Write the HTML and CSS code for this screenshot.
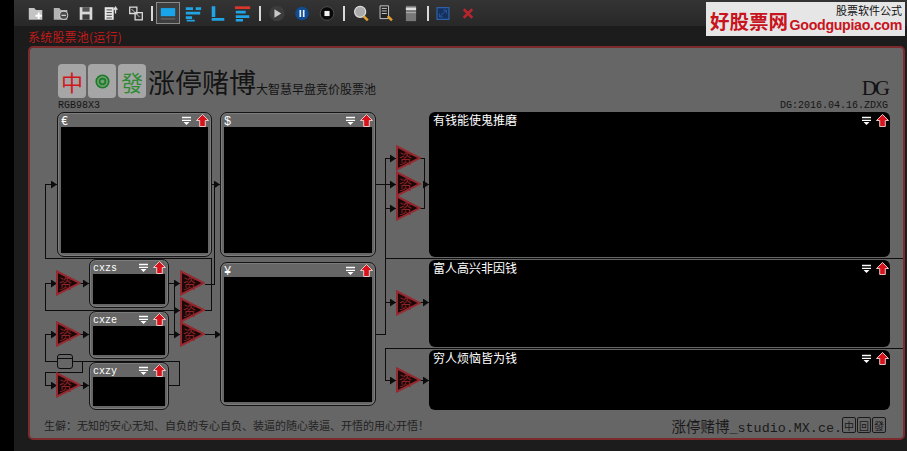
FILE: index.html
```html
<!DOCTYPE html>
<html lang="zh-CN">
<head>
    <meta charset="UTF-8">
    <meta name="viewport" content="width=device-width, initial-scale=1.0">
    <title>涨停赌博</title>
    <link rel="stylesheet" href="styles.css">
</head>
<body>
    <svg class="defs" width="0" height="0">
        <defs>
            <symbol id="i-sort" viewBox="0 0 12 12">
                <path d="M0 1h12v2H0zM0 5h12v1.5H0z" fill="#fff"/>
                <path d="M2 8h8l-4 4z" fill="#fff"/>
            </symbol>
            <symbol id="i-up" viewBox="0 0 14 14">
                <path d="M7 .5 13.5 7H10v6.5H4V7H.5z" fill="#d8131b" stroke="#f3d6d6" stroke-width="1"/>
            </symbol>
            <symbol id="i-tri" viewBox="0 0 25 26">
                <path d="M1 1.5 24 13 1 24.5z" fill="#1a0808" stroke="#962a30" stroke-width="2"/>
                <text x="3" y="18" class="tri-text">资</text>
            </symbol>
            <marker id="arrow" viewBox="0 0 6 8" refX="6" refY="4" markerWidth="6" markerHeight="8" markerUnits="userSpaceOnUse" orient="auto">
                <path d="M0 0 6 4 0 8z" fill="#0c0c0c"/>
            </marker>
        </defs>
    </svg>

    <div class="side"></div>
    <div class="main">
        <div class="toolbar">
            <span class="tool"><svg viewBox="0 0 20 18"><path d="M2 3h6l2 2h7v11H2z" fill="#c4c4c4"/><path d="M13 8v7M9.5 11.5h7" stroke="#fff" stroke-width="2"/></svg></span>
            <span class="tool"><svg viewBox="0 0 20 18"><path d="M2 3h6l2 2h7v11H2z" fill="#b4b4b4"/><circle cx="13" cy="11" r="4.5" fill="#4a4a4a" stroke="#ddd"/><path d="M10.5 11h5" stroke="#fff"/></svg></span>
            <span class="tool"><svg viewBox="0 0 20 18"><path d="M3 2h14v14H3z" fill="#d8d8d8"/><path d="M6 2h8v5H6z" fill="#555"/><path d="M6 10h8v6H6z" fill="#3a3a3a"/></svg></span>
            <span class="tool"><svg viewBox="0 0 20 18"><path d="M3 2h10v14H3z" fill="#e8e8e8"/><path d="M5 5h6M5 8h6M5 11h6M5 14h6" stroke="#333"/><path d="M15 9V3M13 5l2-3 2 3" stroke="#ddd" stroke-width="1.5" fill="none"/></svg></span>
            <span class="tool"><svg viewBox="0 0 20 18"><path d="M3 2h8v7H3zM9 8h8v8H9z" fill="#333" stroke="#ddd" stroke-width="1.4"/><path d="M5 4l9 9" stroke="#ccc"/></svg></span>
            <span class="sep"></span>
            <span class="tool tool-on"><svg viewBox="0 0 20 18"><path d="M2 3h16v9H2z" fill="#19a5ea"/><path d="M2 14h16v2H2z" fill="#58585a"/></svg></span>
            <span class="tool"><svg viewBox="0 0 20 18"><path d="M2 2h8v3H2zM13 2h6v3h-6zM2 7h16v3H2zM2 12h7v3H2zM3 16h9v2H3z" fill="#20a4e4"/></svg></span>
            <span class="tool"><svg viewBox="0 0 20 18"><path d="M3 1h4v12H3zM3 14h14v3H3z" fill="#20a4e4"/></svg></span>
            <span class="tool"><svg viewBox="0 0 20 18"><path d="M1 1h17v3H1z" fill="#d9362e"/><path d="M2 6h11v3H2zM2 11h15v3H2zM2 15h8v3H2z" fill="#20a4e4"/></svg></span>
            <span class="sep sep-wide"></span>
            <span class="tool"><svg viewBox="0 0 20 20"><circle cx="10" cy="10" r="9" fill="#3c3c3c"/><path d="M7 5l8 5-8 5z" fill="#c9c9c9"/></svg></span>
            <span class="tool"><svg viewBox="0 0 20 20"><circle cx="10" cy="10" r="8" fill="#0f4c92"/><path d="M7 6h2v8H7zM11 6h2v8h-2z" fill="#e8f0fa"/></svg></span>
            <span class="tool"><svg viewBox="0 0 20 20"><circle cx="10" cy="10" r="8" fill="#080808" stroke="#555"/><path d="M7 7h6v6H7z" fill="#eee"/></svg></span>
            <span class="sep sep-wide"></span>
            <span class="tool"><svg viewBox="0 0 20 20"><circle cx="9" cy="8" r="6.5" fill="#aaa" stroke="#ddd" stroke-width="1.5"/><path d="M13 13l5 5" stroke="#e0a030" stroke-width="3"/></svg></span>
            <span class="tool"><svg viewBox="0 0 20 20"><path d="M3 1h10v15H3z" fill="#222" stroke="#ddd"/><path d="M5 4h6M5 7h6M5 10h6" stroke="#ddd"/><path d="M12 13l5 5" stroke="#e0a030" stroke-width="3"/></svg></span>
            <span class="tool"><svg viewBox="0 0 20 20"><path d="M4 1h12v18H4z" fill="#777"/><path d="M4 3h12v3H4z" fill="#ddd"/><path d="M4 9h12" stroke="#bbb"/></svg></span>
            <span class="sep sep-last"></span>
            <span class="tool"><svg viewBox="0 0 20 20"><path d="M3 3h14v14H3z" fill="#14305c" stroke="#2e5fa8" stroke-width="1.5"/><path d="M6 14l8-8M6 10v4h4M14 10V6h-4" stroke="#2e5fa8" fill="none"/></svg></span>
            <span class="tool"><svg viewBox="0 0 20 20"><path d="M5 5l10 10M15 5 5 15" stroke="#b8252c" stroke-width="3"/></svg></span>
        </div>

        <div class="ad">
            <span class="ad-cn">好股票网</span>
            <div class="ad-right">
                <span class="ad-note">股票软件公式</span>
                <span class="ad-en">Goodgupiao.com</span>
            </div>
        </div>

        <div class="pool-title">系统股票池(运行)</div>

        <div class="panel">
            <div class="head">
                <div class="head-left">
                    <div class="brand">
                        <span class="tile tile-red">中</span>
                        <span class="tile tile-green"><svg viewBox="0 0 18 18" width="15" height="15"><circle cx="9" cy="9" r="7.5" fill="#6fa070" stroke="#1d7a28" stroke-width="2"/><circle cx="9" cy="9" r="3.5" fill="none" stroke="#1d7a28" stroke-width="2"/></svg></span>
                        <span class="tile tile-green tile-fa">發</span>
                        <span class="brand-name">涨停赌博</span>
                        <span class="brand-sub">大智慧早盘竞价股票池</span>
                    </div>
                    <div class="mono">RGB98X3</div>
                </div>
                <div class="head-right">
                    <div class="dg">DG</div>
                    <div class="mono">DG:2016.04.16.ZDXG</div>
                </div>
            </div>

            <div class="diagram">
                <svg class="wires" viewBox="30 112 873 298" width="873" height="298">
                    <g fill="none" stroke="#0c0c0c" shape-rendering="crispEdges">
                        <path d="M45.5 258.5V184.5H57" marker-end="url(#arrow)"/>
                        <path d="M45.5 258.5H211.5V310.5H205"/>
                        <path d="M205 284.5H214.5V184.5H220" marker-end="url(#arrow)"/>
                        <path d="M212 184.5H220"/>
                        <path d="M376 184.5H396" marker-end="url(#arrow)"/>
                        <path d="M385.5 184.5V158.5H396" marker-end="url(#arrow)"/>
                        <path d="M385.5 184.5V208.5H396" marker-end="url(#arrow)"/>
                        <path d="M420 158.5H424.5V208.5H420M424 184.5H429" marker-end="url(#arrow)"/>
                        <path d="M385.5 208.5V258.5H905"/>
                        <path d="M376 334.5H385.5V258.5"/>
                        <path d="M385.5 302.5H396" marker-end="url(#arrow)"/>
                        <path d="M420 302.5H429" marker-end="url(#arrow)"/>
                        <path d="M905 348.5H385.5V380.5H396" marker-end="url(#arrow)"/>
                        <path d="M420 380.5H429" marker-end="url(#arrow)"/>
                        <path d="M45.5 310.5V283.5H57" marker-end="url(#arrow)"/>
                        <path d="M45.5 310.5H180" marker-end="url(#arrow)"/>
                        <path d="M80 283.5H89" marker-end="url(#arrow)"/>
                        <path d="M45.5 361.5V334.5H57" marker-end="url(#arrow)"/>
                        <path d="M80 334.5H89" marker-end="url(#arrow)"/>
                        <path d="M45.5 361.5H179.5V385.5H169"/>
                        <path d="M82.5 361.5V372.5H45.5V385.5H57" marker-end="url(#arrow)"/>
                        <path d="M80 385.5H89" marker-end="url(#arrow)"/>
                        <path d="M169 283.5H180" marker-end="url(#arrow)"/>
                        <path d="M174.5 283.5V334.5"/>
                        <path d="M169 334.5H180" marker-end="url(#arrow)"/>
                        <path d="M205 334.5H221" marker-end="url(#arrow)"/>
                    </g>
                    <rect x="57.5" y="354.5" width="15" height="14" rx="2.5" fill="#666" stroke="#0c0c0c"/>
                    <path d="M57.5 358.5h15" stroke="#0c0c0c" fill="none"/>
                    <use href="#i-tri" x="396" y="145" width="25" height="26"/>
                    <use href="#i-tri" x="396" y="171" width="25" height="26"/>
                    <use href="#i-tri" x="396" y="195" width="25" height="26"/>
                    <use href="#i-tri" x="396" y="290" width="25" height="26"/>
                    <use href="#i-tri" x="396" y="367" width="25" height="26"/>
                    <use href="#i-tri" x="56" y="270" width="25" height="26"/>
                    <use href="#i-tri" x="56" y="321" width="25" height="26"/>
                    <use href="#i-tri" x="56" y="372" width="25" height="26"/>
                    <use href="#i-tri" x="180" y="270" width="25" height="26"/>
                    <use href="#i-tri" x="180" y="297" width="25" height="26"/>
                    <use href="#i-tri" x="180" y="321" width="25" height="26"/>
                </svg>

                <section class="win win-euro">
                    <div class="win-bar"><span class="win-name">€</span><svg class="ic-sort"><use href="#i-sort"/></svg><svg class="ic-up"><use href="#i-up"/></svg></div>
                    <div class="win-body"></div>
                </section>
                <section class="win win-dollar">
                    <div class="win-bar"><span class="win-name">$</span><svg class="ic-sort"><use href="#i-sort"/></svg><svg class="ic-up"><use href="#i-up"/></svg></div>
                    <div class="win-body"></div>
                </section>
                <section class="win win-yen">
                    <div class="win-bar"><span class="win-name">¥</span><svg class="ic-sort"><use href="#i-sort"/></svg><svg class="ic-up"><use href="#i-up"/></svg></div>
                    <div class="win-body"></div>
                </section>
                <section class="win win-small win-zs">
                    <div class="win-bar"><span class="win-name">cxzs</span><svg class="ic-sort"><use href="#i-sort"/></svg><svg class="ic-up"><use href="#i-up"/></svg></div>
                    <div class="win-body"></div>
                </section>
                <section class="win win-small win-ze">
                    <div class="win-bar"><span class="win-name">cxze</span><svg class="ic-sort"><use href="#i-sort"/></svg><svg class="ic-up"><use href="#i-up"/></svg></div>
                    <div class="win-body"></div>
                </section>
                <section class="win win-small win-zy">
                    <div class="win-bar"><span class="win-name">cxzy</span><svg class="ic-sort"><use href="#i-sort"/></svg><svg class="ic-up"><use href="#i-up"/></svg></div>
                    <div class="win-body"></div>
                </section>

                <section class="board board-a">
                    <div class="board-bar"><span class="board-name">有钱能使鬼推磨</span><svg class="ic-sort"><use href="#i-sort"/></svg><svg class="ic-up"><use href="#i-up"/></svg></div>
                </section>
                <section class="board board-b">
                    <div class="board-bar"><span class="board-name">富人高兴非因钱</span><svg class="ic-sort"><use href="#i-sort"/></svg><svg class="ic-up"><use href="#i-up"/></svg></div>
                </section>
                <section class="board board-c">
                    <div class="board-bar"><span class="board-name">穷人烦恼皆为钱</span><svg class="ic-sort"><use href="#i-sort"/></svg><svg class="ic-up"><use href="#i-up"/></svg></div>
                </section>
            </div>

            <div class="foot">
                <span class="motto">生僻：无知的安心无知、自负的专心自负、装逼的随心装逼、开悟的用心开悟！</span>
                <span class="studio"><span class="studio-cn">涨停赌博</span>_studio.MX.ce.</span>
                <span class="mini-tiles">
                    <span class="mini">中</span><span class="mini">回</span><span class="mini">發</span>
                </span>
            </div>
        </div>
    </div>
</body>
</html>
```

FILE: styles.css
```css
* {
    margin: 0;
    padding: 0;
    box-sizing: border-box;
}

html, body {
    height: 451px;
    overflow: hidden;
}

body {
    display: flex;
    background: #1c1c1c;
    font-family: "Noto Sans CJK SC", "Liberation Sans", sans-serif;
}

.defs {
    position: absolute;
}

.tri-text {
    font-family: "Noto Sans CJK SC", sans-serif;
    font-size: 13px;
    fill: #8e2226;
}

.side {
    width: 14px;
    background: #000;
    flex: none;
}

.main {
    position: relative;
    flex: 1;
}

/* toolbar */
.toolbar {
    height: 26px;
    padding-left: 10px;
    display: flex;
    align-items: center;
    gap: 1px;
    background: linear-gradient(#343434, #282828);
}

.tool {
    width: 24px;
    height: 22px;
    display: flex;
    align-items: center;
    justify-content: center;
    flex: none;
}

.tool svg {
    width: 18px;
    height: 17px;
}

.tool-on {
    background: #3e3e3e;
    border: 1px solid #8a8a8a;
}

.sep {
    width: 2px;
    height: 15px;
    margin: 0 2px;
    background: #d8d8d8;
    flex: none;
}

.sep-wide {
    margin: 0 3px;
}

.sep-last {
    margin: 0 1px 0 3px;
}

/* logo over the toolbar */
.ad {
    position: absolute;
    top: 2px;
    right: 2px;
    width: 199px;
    height: 34px;
    padding: 0 3px 2px 4px;
    display: flex;
    align-items: flex-end;
    background: #e6e6e6;
}

.ad-cn {
    flex: none;
    white-space: nowrap;
    font-size: 19.5px;
    line-height: 26px;
    font-weight: 700;
    color: #c8141e;
}

.ad-right {
    flex: 1;
    display: flex;
    flex-direction: column;
    align-items: flex-end;
}

.ad-note {
    font-size: 11px;
    line-height: 13px;
    color: #111;
}

.ad-en {
    font-family: "Liberation Sans", sans-serif;
    font-size: 14.2px;
    line-height: 17px;
    font-weight: 700;
    letter-spacing: -0.3px;
    color: #c8141e;
}

.pool-title {
    height: 20px;
    padding: 3px 0 0 14px;
    font-size: 12px;
    line-height: 16px;
    letter-spacing: 0.2px;
    color: #c41a1a;
}

/* main panel */
.panel {
    width: 877px;
    height: 394px;
    margin-left: 14px;
    background: #666;
    border: 2px solid #7d2a2c;
    border-radius: 5px;
}

.head {
    height: 64px;
    padding: 14px 15px 0 28px;
    display: flex;
    justify-content: space-between;
    align-items: flex-end;
}

.brand {
    display: flex;
    align-items: flex-end;
    gap: 2px;
    height: 36px;
}

.tile {
    width: 28px;
    height: 34px;
    margin-bottom: 2px;
    display: flex;
    align-items: center;
    justify-content: center;
    background: #a6a6a6;
    border-radius: 4px;
    font-size: 22px;
}

.tile-red {
    color: #d0181c;
}

.tile-green {
    color: #2f8a34;
}

.tile-fa {
    font-family: "Noto Sans CJK TC", sans-serif;
}

.brand-name {
    font-size: 27px;
    line-height: 36px;
    color: #141414;
}

.brand-sub {
    margin-left: -2px;
    font-size: 12px;
    line-height: 22px;
    color: #141414;
}

.mono {
    font-family: "Liberation Mono", monospace;
    font-size: 10px;
    line-height: 12px;
    color: #151515;
}

.head-right {
    text-align: right;
}

.dg {
    font-family: "Liberation Serif", serif;
    font-size: 21px;
    line-height: 24px;
    letter-spacing: -2px;
    color: #111;
}

/* diagram canvas, origin at 30,112 */
.diagram {
    position: relative;
    height: 298px;
}

.wires {
    position: absolute;
    left: 0;
    top: 0;
}

.win {
    position: absolute;
    display: flex;
    flex-direction: column;
    padding: 0 3px 3px;
    background: #666;
    border: 1px solid #141414;
    border-radius: 7px;
    box-shadow: inset 0 0 0 1px #7c7c7c;
}

.win-euro { left: 27px; top: 0; width: 155px; height: 145px; }
.win-dollar { left: 190px; top: 0; width: 156px; height: 145px; }
.win-yen { left: 190px; top: 150px; width: 156px; height: 144px; }
.win-zs { left: 59px; top: 147px; width: 80px; height: 49px; }
.win-ze { left: 59px; top: 199px; width: 80px; height: 48px; }
.win-zy { left: 59px; top: 250px; width: 80px; height: 48px; }

.win-bar, .board-bar {
    display: flex;
    align-items: center;
    gap: 5px;
    flex: none;
}

.win-bar {
    height: 14px;
    margin-right: -1px;
}

.win-name {
    flex: 1;
    padding-top: 3px;
    font-family: "Liberation Mono", monospace;
    font-size: 12px;
    color: #fff;
}

.win-small .win-name {
    font-size: 10px;
}

.win-body {
    flex: 1;
    background: #000;
}

.ic-sort {
    width: 9px;
    height: 9px;
}

.ic-up {
    width: 13px;
    height: 13px;
}

.board {
    position: absolute;
    left: 399px;
    width: 461px;
    padding: 1px 1px 0 4px;
    background: #000;
    border-radius: 6px;
}

.board-a { top: 0; height: 145px; }
.board-b { top: 148px; height: 87px; }
.board-c { top: 238px; height: 60px; }

.board-bar {
    height: 14px;
}

.board-name {
    flex: 1;
    font-size: 12px;
    line-height: 14px;
    color: #fff;
}

/* footer */
.foot {
    height: 28px;
    padding: 2px 17px 0 14px;
    display: flex;
    align-items: center;
    color: #1a1a1a;
}

.motto {
    flex: 1;
    font-size: 11px;
    line-height: 14px;
    color: #222;
}

.studio {
    font-family: "Liberation Mono", monospace;
    font-size: 13.4px;
}

.studio-cn {
    font-family: "Noto Sans CJK SC", sans-serif;
    font-size: 14.5px;
}

.mini-tiles {
    display: flex;
    gap: 1px;
}

.mini {
    width: 14px;
    height: 16px;
    display: flex;
    align-items: center;
    justify-content: center;
    border: 1px solid #1a1a1a;
    border-radius: 2px;
    font-size: 10px;
}
```
